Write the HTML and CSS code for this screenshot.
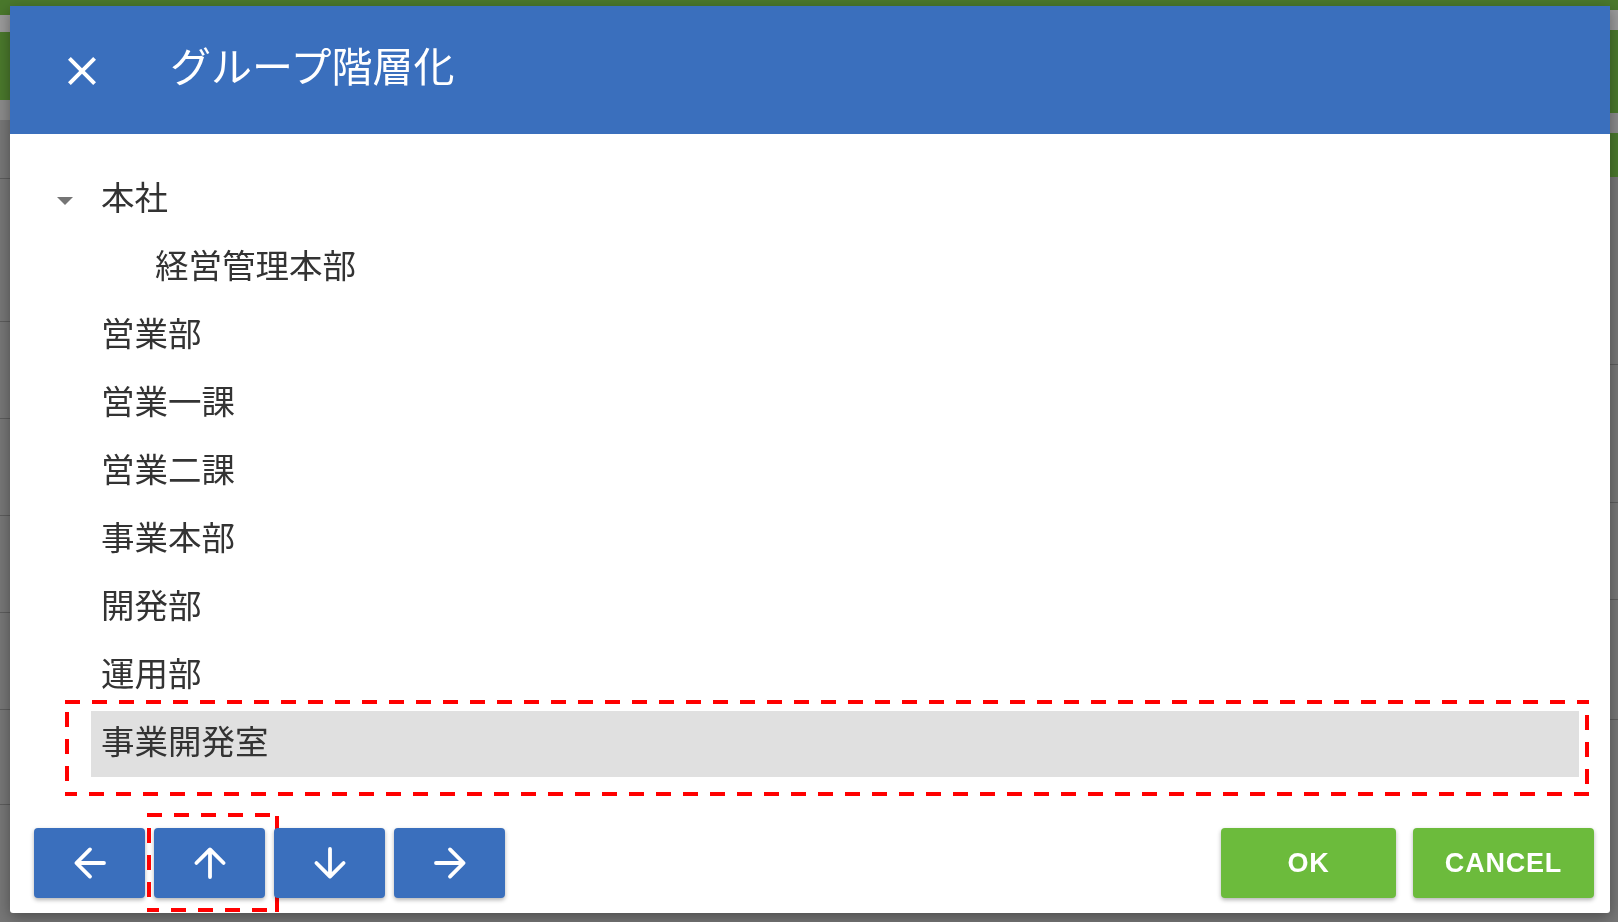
FILE: index.html
```html
<!DOCTYPE html>
<html lang="ja">
<head>
<meta charset="utf-8">
<title>グループ階層化</title>
<link rel="stylesheet" href="styles.css">
</head>
<body>
<div class="page">
  <div class="page-col">
    <div class="band band-green h15"></div>
    <div class="band band-light h17"></div>
    <div class="band band-green h68"></div>
    <div class="band band-mid h20"></div>
    <div class="bg-rows">
      <div class="bg-row h59"></div>
      <div class="bg-row h143"></div>
      <div class="bg-row h97"></div>
      <div class="bg-row h97"></div>
      <div class="bg-row h97"></div>
      <div class="bg-row h97"></div>
      <div class="bg-row h95"></div>
    </div>
  </div>
  <div class="page-col">
    <div class="band band-green h10"></div>
    <div class="band band-light h20"></div>
    <div class="band band-green h83"></div>
    <div class="band band-mid h20"></div>
    <div class="band band-green h44"></div>
    <div class="bg-rows">
      <div class="bg-row h188"></div>
      <div class="bg-row h138"></div>
      <div class="bg-row h97"></div>
      <div class="bg-row h120"></div>
    </div>
  </div>
</div>

<div class="overlay">
  <div class="dialog">
    <header class="dialog-header">
      <button class="close-btn" aria-label="閉じる">
        <svg viewBox="0 0 24 24" width="48" height="48"><path fill="#fff" d="M19 6.41L17.59 5 12 10.59 6.41 5 5 6.41 10.59 12 5 17.59 6.41 19 12 13.41 17.59 19 19 17.59 13.41 12z"/></svg>
      </button>
      <h1 class="dialog-title">グループ階層化</h1>
    </header>

    <div class="dialog-body">
      <ul class="tree">
        <li class="node">
          <div class="node-row">
            <span class="toggle"><span class="caret"></span></span>
            <span class="label">本社</span>
          </div>
          <ul class="tree children">
            <li class="node"><div class="node-row"><span class="toggle"></span><span class="label">経営管理本部</span></div></li>
          </ul>
        </li>
        <li class="node"><div class="node-row"><span class="toggle"></span><span class="label">営業部</span></div></li>
        <li class="node"><div class="node-row"><span class="toggle"></span><span class="label">営業一課</span></div></li>
        <li class="node"><div class="node-row"><span class="toggle"></span><span class="label">営業二課</span></div></li>
        <li class="node"><div class="node-row"><span class="toggle"></span><span class="label">事業本部</span></div></li>
        <li class="node"><div class="node-row"><span class="toggle"></span><span class="label">開発部</span></div></li>
        <li class="node"><div class="node-row"><span class="toggle"></span><span class="label">運用部</span></div></li>
        <li class="node selected">
          <div class="node-row">
            <span class="toggle"></span>
            <span class="label">事業開発室
              <svg class="mark mark-row" aria-hidden="true"><rect width="100%" height="100%"/></svg>
            </span>
          </div>
        </li>
      </ul>
    </div>

    <footer class="dialog-footer">
      <div class="btn-group">
        <button class="btn btn-blue" aria-label="左">
          <svg viewBox="0 0 24 24" width="48" height="48"><path d="M19 12H5.5M12 5.2L5.2 12l6.8 6.8"/></svg>
        </button>
        <button class="btn btn-blue marked" aria-label="上">
          <svg viewBox="0 0 24 24" width="48" height="48"><path d="M12 19V5.5M5.2 12L12 5.2l6.8 6.8"/></svg>
          <svg class="mark mark-btn" aria-hidden="true"><rect width="100%" height="100%"/></svg>
        </button>
        <button class="btn btn-blue" aria-label="下">
          <svg viewBox="0 0 24 24" width="48" height="48"><path d="M12 5v13.5M5.2 12l6.8 6.8 6.8-6.8"/></svg>
        </button>
        <button class="btn btn-blue" aria-label="右">
          <svg viewBox="0 0 24 24" width="48" height="48"><path d="M5 12h13.5M12 5.2l6.8 6.8-6.8 6.8"/></svg>
        </button>
      </div>
      <div class="btn-group btn-group-right">
        <button class="btn btn-green btn-ok">OK</button>
        <button class="btn btn-green btn-cancel">CANCEL</button>
      </div>
    </footer>
  </div>
</div>
</body>
</html>
```

FILE: styles.css
```css
* { box-sizing: border-box; }

html, body {
  margin: 0;
  padding: 0;
  width: 1618px;
  height: 922px;
  overflow: hidden;
  background: #737373;
  font-family: "Noto Sans CJK JP", "Noto Sans", sans-serif;
}

/* ---------- dimmed page behind the dialog ---------- */
.page {
  display: grid;
  grid-template-columns: 1fr 1fr;
  height: 922px;
}
.page-col {
  display: flex;
  flex-direction: column;
  background: #767676;
}
.band { flex: none; }
.band-green { background: #4a782c; }
.band-light { background: #9a9a9a; }
.band-mid { background: #8a8a8a; }
.bg-rows { display: flex; flex-direction: column; }
.bg-row { flex: none; border-bottom: 1px solid #5c5c5c; }

.h10 { height: 10px; }
.h15 { height: 15px; }
.h17 { height: 17px; }
.h20 { height: 20px; }
.h44 { height: 44px; }
.h59 { height: 59px; }
.h68 { height: 68px; }
.h83 { height: 83px; }
.h95 { height: 95px; }
.h97 { height: 97px; }
.h120 { height: 120px; }
.h138 { height: 138px; }
.h143 { height: 143px; }
.h188 { height: 188px; }

/* ---------- modal ---------- */
.overlay {
  position: fixed;
  inset: 0;
  padding: 6px 8px 9px 10px;
  display: flex;
}
.dialog {
  flex: 1;
  display: flex;
  flex-direction: column;
  background: #fff;
  border-radius: 0 0 3px 3px;
  box-shadow: 0 4px 14px rgba(0, 0, 0, 0.35);
  position: relative;
}

.dialog-header {
  flex: none;
  height: 128px;
  background: #3a6fbd;
  display: flex;
  align-items: center;
  padding-left: 48px;
}
.close-btn {
  border: 0;
  background: none;
  padding: 0;
  width: 48px;
  height: 48px;
  display: flex;
  margin-top: 1px;
}
.dialog-title {
  margin: 0 0 12px 64px;
  font-size: 41px;
  line-height: 1;
  font-weight: 400;
  color: #fff;
  letter-spacing: 0;
}

/* ---------- tree ---------- */
.dialog-body {
  flex: 1;
  padding: 32px 31px 0 31px;
}
.tree {
  list-style: none;
  margin: 0;
  padding: 0;
}
.tree.children { padding-left: 54px; }
.node-row {
  display: flex;
  height: 68px;
}
.toggle {
  flex: none;
  width: 50px;
  display: flex;
  justify-content: center;
  align-items: center;
}
.caret {
  width: 0;
  height: 0;
  border-left: 8px solid transparent;
  border-right: 8px solid transparent;
  border-top: 8px solid #757575;
  margin: 1px 2px 0 0;
}
.label {
  flex: 1;
  margin: 1px 0;
  display: flex;
  align-items: center;
  padding: 0 0 9px 10px;
  font-size: 33.5px;
  line-height: 1;
  color: #333;
  position: relative;
}
.selected .label { background: #e0e0e0; }

/* annotation dashed frames */
.mark {
  position: absolute;
  overflow: hidden;
  pointer-events: none;
}
.mark rect {
  fill: none;
  stroke: #ff0000;
  stroke-width: 8px;
  stroke-dasharray: 15 12;
}
.mark-row {
  left: -26px;
  top: -11px;
  width: calc(100% + 36px);
  height: calc(100% + 30px);
}
.mark-btn {
  left: -7px;
  top: -15px;
  width: calc(100% + 21px);
  height: calc(100% + 29px);
}

/* ---------- footer ---------- */
.dialog-footer {
  flex: none;
  display: flex;
  justify-content: space-between;
  padding: 0 16px 15px 24px;
}
.btn-group {
  display: flex;
  gap: 9px;
}
.btn-group-right { gap: 17px; }
.btn {
  height: 70px;
  border: 0;
  border-radius: 4px;
  color: #fff;
  display: flex;
  align-items: center;
  justify-content: center;
  box-shadow: 0 2px 4px rgba(0, 0, 0, 0.3);
  padding: 0;
  position: relative;
}
.btn-blue {
  width: 111px;
  background: #3a6fbd;
}
.btn-blue svg path {
  fill: none;
  stroke: #fff;
  stroke-width: 1.9;
  stroke-linecap: round;
  stroke-linejoin: round;
}
.btn-green {
  background: #6cbb3c;
  font-family: "Liberation Sans", Arial, sans-serif;
  font-weight: 700;
  font-size: 27px;
  letter-spacing: 0.8px;
}
.btn-ok { width: 175px; }
.btn-cancel { width: 181px; }
```
